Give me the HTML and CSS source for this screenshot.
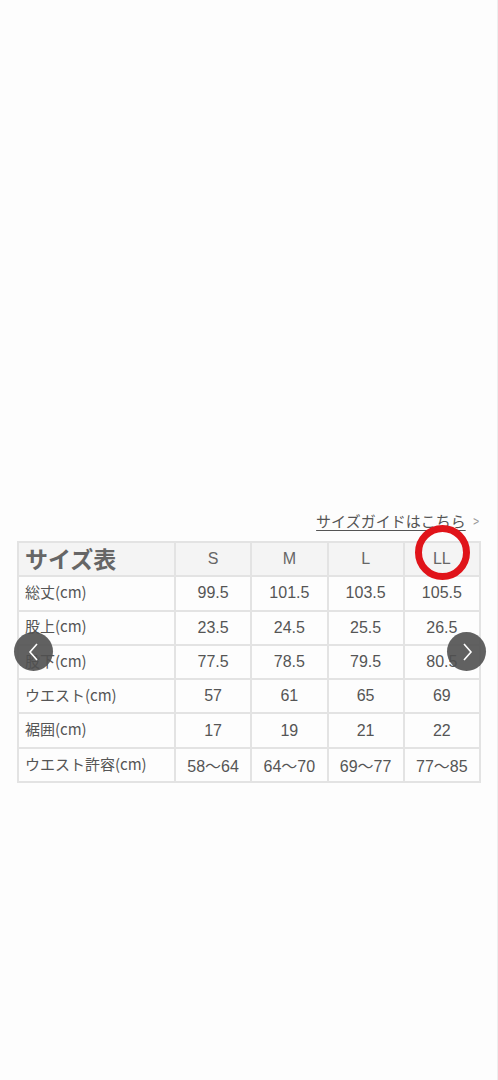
FILE: index.html
```html
<!DOCTYPE html>
<html lang="ja">
<head>
    <meta charset="UTF-8">
    <meta name="viewport" content="width=device-width, initial-scale=1.0">
    <title>サイズ表</title>
    <link rel="stylesheet" href="styles.css">
</head>
<body>
    <div class="page">
        <div class="blank"></div>
        <div class="size-box">
            <div class="guide-row">
                <a class="guide-link" href="#">サイズガイドはこちら</a>
                <span class="guide-arrow">&gt;</span>
            </div>
            <table class="size-table">
                <colgroup>
                    <col class="col-label">
                    <col><col><col><col>
                </colgroup>
                <tr class="head">
                    <th class="title">サイズ表</th>
                    <th>S</th>
                    <th>M</th>
                    <th>L</th>
                    <th class="marked">LL<span class="ring"></span></th>
                </tr>
                <tr><td class="label">総丈(cm)</td><td>99.5</td><td>101.5</td><td>103.5</td><td>105.5</td></tr>
                <tr><td class="label">股上(cm)</td><td>23.5</td><td>24.5</td><td>25.5</td><td>26.5</td></tr>
                <tr><td class="label">股下(cm)</td><td>77.5</td><td>78.5</td><td>79.5</td><td>80.5</td></tr>
                <tr><td class="label">ウエスト(cm)</td><td>57</td><td>61</td><td>65</td><td>69</td></tr>
                <tr><td class="label">裾囲(cm)</td><td>17</td><td>19</td><td>21</td><td>22</td></tr>
                <tr><td class="label">ウエスト許容(cm)</td><td>58〜64</td><td>64〜70</td><td>69〜77</td><td>77〜85</td></tr>
            </table>
            <button class="nav prev" aria-label="前へ">
                <svg width="12" height="20" viewBox="0 0 12 20"><path d="M9 2 L2 10 L9 18" fill="none" stroke="#fff" stroke-width="1.6"/></svg>
            </button>
            <button class="nav next" aria-label="次へ">
                <svg width="12" height="20" viewBox="0 0 12 20"><path d="M3 2 L10 10 L3 18" fill="none" stroke="#fff" stroke-width="1.6"/></svg>
            </button>
        </div>
    </div>
</body>
</html>
```

FILE: styles.css
```css
body {
    margin: 0;
    padding: 0;
    background: #fdfdfd;
    font-family: "Liberation Sans", "Noto Sans CJK JP", sans-serif;
    color: #555;
}
.page {
    width: 497px;
    min-height: 1080px;
    border-right: 1px solid #eee;
}
.blank {
    height: 506px;
}
.size-box {
    position: relative;
    padding: 0 17px;
}
.guide-row {
    display: flex;
    justify-content: flex-end;
    align-items: center;
    height: 28px;
    font-family: "Noto Sans CJK JP", sans-serif;
    font-size: 15px;
    padding-right: 0;
}
.guide-link {
    color: #555;
    text-decoration: underline;
    text-underline-offset: 3px;
}
.guide-arrow {
    margin-left: 6px;
    color: #999;
    font-size: 15px;
    transform: scaleX(0.7);
}
.size-table {
    width: 464px;
    margin-top: 7px;
    border-collapse: collapse;
    table-layout: fixed;
    font-size: 16px;
}
.size-table tr {
    height: 34.3px;
}
.col-label {
    width: 157px;
}
.size-table th,
.size-table td {
    border: 2px solid #e3e3e3;
    padding: 0;
    text-align: center;
    color: #555;
    font-weight: normal;
}
.size-table .head th {
    background: #f4f4f4;
    color: #666;
}
.size-table .title {
    text-align: left;
    padding: 0 0 2px 6px;
    font-family: "Noto Sans CJK JP", sans-serif;
    font-size: 23px;
    line-height: 1;
    font-weight: bold;
    color: #777;
}
.size-table .label {
    text-align: left;
    padding: 0 0 3px 6px;
    font-family: "Noto Sans CJK JP", sans-serif;
    font-size: 15px;
    line-height: 1.3;
}
.marked {
    position: relative;
}
.ring {
    position: absolute;
    left: 50%;
    top: 50%;
    width: 41px;
    height: 41px;
    margin: -34px 0 0 -27px;
    border: 7px solid #e0141a;
    border-radius: 50%;
}
.nav {
    position: absolute;
    top: 126px;
    width: 39px;
    height: 39px;
    border: none;
    border-radius: 50%;
    background: rgba(80, 80, 80, 0.9);
    display: flex;
    align-items: center;
    justify-content: center;
    padding: 0;
}
.prev {
    left: 14px;
}
.next {
    left: 447px;
}
```
